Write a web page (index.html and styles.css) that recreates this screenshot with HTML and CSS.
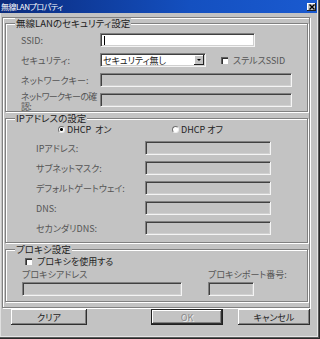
FILE: index.html
```html
<!DOCTYPE html>
<html>
<head>
    <meta charset="utf-8">
    <link rel="stylesheet" href="styles.css">
</head>
<body>
    <div class="window">
        <!-- Title Bar -->
        <div class="titlebar">
            <span class="title">無線LANプロパティ</span>
            <span class="close-btn">
                <svg width="6" height="6" viewBox="0 0 6 6"><path d="M0.5 0.5 L5.5 5.5 M5.5 0.5 L0.5 5.5" stroke="#000" stroke-width="1.4"/></svg>
            </span>
        </div>

        <div class="frame">
            <!-- Wireless LAN security -->
            <fieldset class="group group-wlan">
                <legend>無線LANのセキュリティ設定</legend>
                <div class="rows">
                    <div class="row">
                        <span class="label">SSID:</span>
                        <span class="field field-white field-ssid"><span class="caret"></span></span>
                    </div>
                    <div class="row">
                        <span class="label">セキュリティ:</span>
                        <span class="field field-white select">
                            <span class="select-text">セキュリティ無し</span>
                            <span class="select-btn"><span class="arrow"></span></span>
                        </span>
                        <span class="check check-stealth"></span>
                        <span class="text">ステルスSSID</span>
                    </div>
                    <div class="row">
                        <span class="label">ネットワークキー:</span>
                        <span class="field field-key"></span>
                    </div>
                    <div class="row">
                        <span class="label label-wrap">ネットワークキーの確<br>認:</span>
                        <span class="field field-key"></span>
                    </div>
                </div>
            </fieldset>

            <!-- IP address -->
            <fieldset class="group group-ip">
                <legend>IPアドレスの設定</legend>
                <div class="rows">
                    <div class="row radio-row">
                        <span class="radio-opt radio-opt-on">
                            <span class="radio checked"></span>
                            <span class="text">DHCP&nbsp;&nbsp;オン</span>
                        </span>
                        <span class="radio-opt">
                            <span class="radio"></span>
                            <span class="text">DHCP オフ</span>
                        </span>
                    </div>
                    <div class="row">
                        <span class="label label-ip">IPアドレス:</span>
                        <span class="field field-ip"></span>
                    </div>
                    <div class="row">
                        <span class="label label-ip">サブネットマスク:</span>
                        <span class="field field-ip"></span>
                    </div>
                    <div class="row">
                        <span class="label label-ip">デフォルトゲートウェイ:</span>
                        <span class="field field-ip"></span>
                    </div>
                    <div class="row">
                        <span class="label label-ip">DNS:</span>
                        <span class="field field-ip"></span>
                    </div>
                    <div class="row">
                        <span class="label label-ip">セカンダリDNS:</span>
                        <span class="field field-ip"></span>
                    </div>
                </div>
            </fieldset>

            <!-- Proxy -->
            <fieldset class="group group-proxy">
                <legend>プロキシ設定</legend>
                <div class="proxy-check">
                    <span class="check"></span>
                    <span class="text text-dark">プロキシを使用する</span>
                </div>
                <div class="proxy-cols">
                    <div class="proxy-col">
                        <span class="label">プロキシアドレス</span>
                        <span class="field field-proxy-addr"></span>
                    </div>
                    <div class="proxy-col">
                        <span class="label">プロキシポート番号:</span>
                        <span class="field field-proxy-port"></span>
                    </div>
                </div>
            </fieldset>
        </div>

        <!-- Buttons -->
        <div class="buttons">
            <button class="btn btn-clear">クリア</button>
            <button class="btn btn-ok">OK</button>
            <button class="btn btn-cancel">キャンセル</button>
        </div>
    </div>
</body>
</html>
```

FILE: styles.css
```css
/* Global */
body {
    margin: 0;
    background: #c3c3c3;
    font-family: "Noto Sans CJK JP", "Noto Sans", sans-serif;
    font-size: 9px;
    font-feature-settings: "palt";
    color: #555;
}

.window {
    width: 320px;
    height: 339px;
    box-sizing: border-box;
    background: #c3c3c3;
    box-shadow: inset -1px -1px 0 #2a2a2a, inset -2px -2px 0 #5a5a5a, inset -3px -3px 0 #e6e6e6, inset 1px 0 0 #e0e0e0;
    overflow: hidden;
}

/* Title bar */
.titlebar {
    height: 13px;
    margin-right: 3px;
    display: flex;
    align-items: center;
    justify-content: space-between;
    background: linear-gradient(90deg, #0a2a7c, #1450c0 60%, #1a5ad0);
}

.title {
    color: #fff;
    font-size: 8px;
    line-height: 13px;
    letter-spacing: -0.5px;
    padding-left: 1px;
}

.close-btn {
    width: 9px;
    height: 8px;
    margin-right: 1px;
    box-sizing: border-box;
    background: #c3c3c3;
    display: flex;
    align-items: center;
    justify-content: center;
    box-shadow: inset -1px -1px 0 #202020, inset 1px 1px 0 #fff;
}

/* Outer etched frame */
.frame {
    margin: 4px 10px 0 2px;
    padding: 0 1px 5px 2px;
    border: 1px solid #808080;
    box-shadow: inset 1px 1px 0 #fff, 1px 1px 0 #fff;
}

/* Group boxes */
.group {
    margin: 0;
    padding: 0;
    border: 1px solid #808080;
    box-shadow: inset 1px 1px 0 #fff, 1px 1px 0 #fff;
    min-width: 0;
}

.group + .group {
    margin-top: 1px;
}

.group legend {
    margin-left: 9px;
    padding: 0 1px;
    font-size: 9.5px;
    line-height: 10px;
    color: #222;
    background: #c3c3c3;
}

.rows {
    display: flex;
    flex-direction: column;
    gap: 6px;
}

.group-wlan .rows {
    padding: 5px 13px 4px 15px;
}

.group-ip .rows {
    padding: 1px 13px 7px 30px;
}

.row {
    display: flex;
    align-items: center;
    height: 14px;
}

.label {
    line-height: 9px;
    white-space: nowrap;
}

.group-wlan .label {
    width: 79px;
    flex: none;
}

.group-wlan .label-wrap {
    margin-top: 3px;
    line-height: 10px;
    letter-spacing: -0.7px;
}

.label-ip {
    width: 109px;
    flex: none;
}

.text {
    line-height: 9px;
    white-space: nowrap;
}

.text-dark {
    color: #222;
}

/* Sunken fields */
.field {
    display: block;
    height: 14px;
    box-sizing: border-box;
    border-top: 1px solid #808080;
    border-left: 1px solid #808080;
    border-right: 1px solid #f4f4f4;
    border-bottom: 1px solid #f4f4f4;
    box-shadow: inset 1px 1px 0 #404040, inset -1px -1px 0 #d0d0d0;
    flex: none;
}

.field-white {
    background: #fff;
}

.field-ssid {
    width: 155px;
    display: flex;
    align-items: center;
}

.caret {
    width: 1px;
    height: 9px;
    margin-left: 3px;
    background: #000;
}

.field-key {
    width: 192px;
}

.field-ip {
    width: 126px;
}

/* Combo box */
.select {
    width: 106px;
    display: flex;
    align-items: center;
    justify-content: space-between;
    color: #222;
}

.select-text {
    padding-left: 2px;
    line-height: 9px;
}

.select-btn {
    width: 10px;
    height: 10px;
    margin-right: 1px;
    box-sizing: border-box;
    background: #c3c3c3;
    box-shadow: inset -1px -1px 0 #202020, inset 1px 1px 0 #fff;
    display: flex;
    align-items: center;
    justify-content: center;
}

.arrow {
    width: 0;
    height: 0;
    border-left: 2px solid transparent;
    border-right: 2px solid transparent;
    border-top: 2px solid #000;
}

/* Check boxes and radios */
.check {
    width: 7px;
    height: 7px;
    box-sizing: border-box;
    background: #fff;
    border-top: 1px solid #606060;
    border-left: 1px solid #606060;
    box-shadow: inset 1px 1px 0 #303030;
    flex: none;
    margin-right: 5px;
}

.check-stealth {
    margin-left: 15px;
}

.radio-row {
    height: 11px;
    color: #222;
}

.radio-opt {
    display: flex;
    align-items: center;
    width: 114px;
    flex: none;
}

.radio-opt-on {
    margin-left: 22px;
}

.radio {
    width: 7px;
    height: 7px;
    box-sizing: border-box;
    border-radius: 50%;
    background: #fff;
    border: 1px solid #707070;
    border-right-color: #eee;
    border-bottom-color: #eee;
    margin-right: 2px;
    flex: none;
}

.radio.checked {
    background: radial-gradient(circle, #000 0 1.3px, #fff 1.6px);
}

/* Proxy */
.proxy-check {
    display: flex;
    align-items: center;
    height: 11px;
    padding: 2px 0 0 19px;
}

.proxy-cols {
    display: flex;
    gap: 26px;
    padding: 3px 0 5px 16px;
}

.proxy-col {
    display: flex;
    flex-direction: column;
    gap: 3px;
}

.field-proxy-addr {
    width: 160px;
}

.field-proxy-port {
    width: 46px;
}

/* Buttons */
.buttons {
    display: flex;
    padding: 0 10px 0 11px;
    margin-top: 1px;
}

.btn {
    height: 16px;
    padding: 0;
    font-family: inherit;
    font-size: 9px;
    font-feature-settings: "palt";
    line-height: 9px;
    color: #222;
    background: #c3c3c3;
    border: none;
    box-shadow: inset -1px -1px 0 #303030, inset 1px 1px 0 #fff, inset -2px -2px 0 #808080;
}

.btn-clear {
    width: 76px;
}

.btn-ok {
    width: 72px;
    margin-left: auto;
    color: #8a8a8a;
    text-shadow: 1px 1px 0 #f0f0f0;
    box-shadow: inset 0 0 0 1px #202020, inset -2px -2px 0 #303030, inset 2px 2px 0 #fff, inset -3px -3px 0 #808080;
}

.btn-cancel {
    width: 72px;
    margin-left: 15px;
}
```
